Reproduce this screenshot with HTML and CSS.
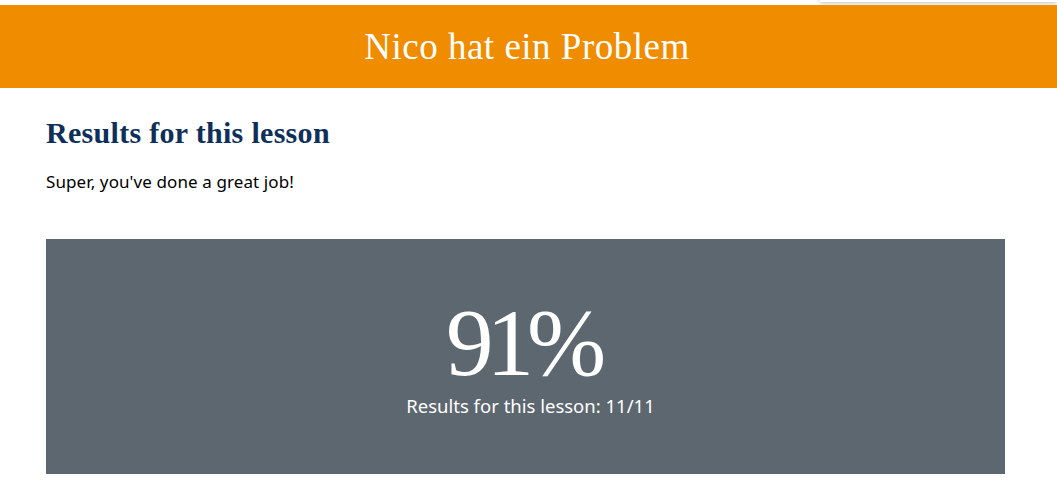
FILE: index.html
```html
<!DOCTYPE html>
<html lang="de">
<head>
<meta charset="utf-8">
<title>Nico hat ein Problem</title>
<link rel="stylesheet" href="styles.css">
</head>
<body>
<div class="topshadow"></div>
<header class="banner">
  <h1 class="banner-title">Nico hat ein Problem</h1>
</header>
<main class="content">
  <h2 class="section-title">Results for this lesson</h2>
  <p class="lead">Super, you've done a great job!</p>
  <section class="score">
    <div class="score-value">91%</div>
    <div class="score-label">Results for this lesson: 11/11</div>
  </section>
</main>
</body>
</html>
```

FILE: styles.css
```css
html, body {
  margin: 0;
  padding: 0;
  background: #ffffff;
}
body {
  padding-top: 5px;
  font-family: "Noto Sans", "Open Sans", sans-serif;
  position: relative;
}
.topshadow {
  position: absolute;
  top: -6px;
  left: 820px;
  right: 0;
  height: 8px;
  background: #fff;
  box-shadow: 0 1px 5px rgba(0,0,0,0.25);
}
.banner {
  position: relative;
  background: #f08c00;
  height: 83px;
  display: flex;
  align-items: center;
  justify-content: center;
}
.banner-title {
  margin: 0;
  color: #ffffff;
  font-family: "Liberation Serif", serif;
  font-weight: normal;
  font-size: 37px;
  letter-spacing: 0.5px;
  padding-right: 3px;
}
.content {
  padding: 28px 52px 0 46px;
}
.section-title {
  margin: 0;
  color: #0d2f5a;
  font-family: "Liberation Serif", serif;
  font-weight: bold;
  font-size: 30px;
  letter-spacing: 0.3px;
}
.lead {
  margin: 20px 0 0;
  font-size: 17px;
  letter-spacing: 0.1px;
  color: #000;
}
.score {
  margin-top: 46px;
  background: #5d6770;
  height: 235px;
  display: flex;
  flex-direction: column;
  align-items: center;
  justify-content: center;
  color: #fff;
}
.score-value {
  font-family: "Liberation Serif", serif;
  font-size: 95px;
  line-height: 1;
  letter-spacing: -7px;
  padding-right: 6px;
}
.score-label {
  font-size: 18.5px;
  margin-top: 2px;
  padding-left: 10px;
}
```
